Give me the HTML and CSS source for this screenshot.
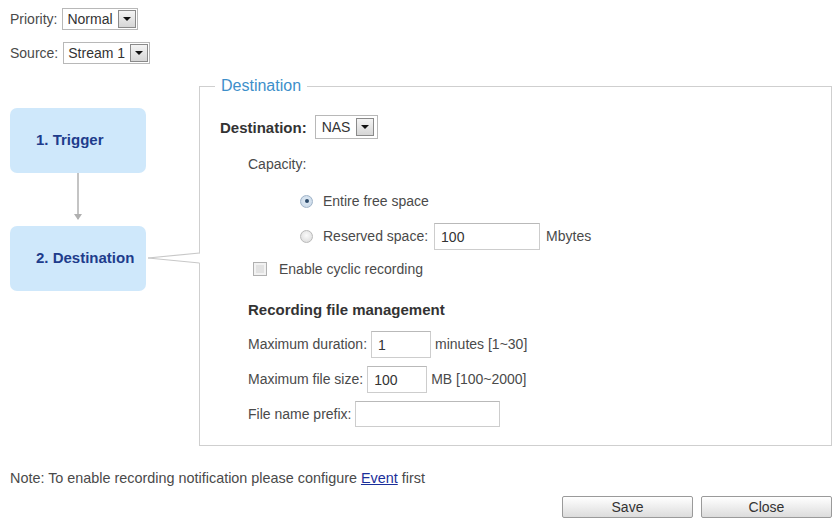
FILE: index.html
```html
<!DOCTYPE html>
<html lang="en">
<head>
  <meta charset="UTF-8">
  <title>Recording Settings</title>
  <link rel="stylesheet" href="styles.css">
</head>
<body>

<div class="page">
  <div class="top-row">
    <span class="lbl">Priority:</span>
    <span class="select"><span class="select-val">Normal</span><span class="select-btn"></span></span>
  </div>
  <div class="top-row second">
    <span class="lbl">Source:</span>
    <span class="select"><span class="select-val">Stream 1</span><span class="select-btn"></span></span>
  </div>

  <div class="main">
    <div class="flow">
      <div class="step">1. Trigger</div>
      <div class="flow-arrow">
        <svg width="12" height="53" viewBox="0 0 12 53"><line x1="6" y1="0" x2="6" y2="46" stroke="#b0b0b0" stroke-width="1.5"/><path d="M2 41 L6 47 L10 41 Z" fill="#b0b0b0"/></svg>
      </div>
      <div class="step">2. Destination</div>
    </div>

    <fieldset class="panel">
      <legend>Destination</legend>
      <div class="row row-dest">
        <b class="big">Destination:</b>
        <span class="select wide"><span class="select-val">NAS</span><span class="select-btn"></span></span>
      </div>
      <div class="row row-cap">Capacity:</div>
      <div class="row row-radio1">
        <span class="radio checked"></span>
        <span>Entire free space</span>
      </div>
      <div class="row row-radio2">
        <span class="radio"></span>
        <span>Reserved space:</span>
        <span class="input w-reserved">100</span>
        <span class="unit">Mbytes</span>
      </div>
      <div class="row row-check">
        <span class="check"></span>
        <span>Enable cyclic recording</span>
      </div>
      <div class="row row-head"><b class="big">Recording file management</b></div>
      <div class="row row-dur">
        <span>Maximum duration:</span>
        <span class="input w-dur">1</span>
        <span>minutes [1~30]</span>
      </div>
      <div class="row row-size">
        <span>Maximum file size:</span>
        <span class="input w-size">100</span>
        <span>MB [100~2000]</span>
      </div>
      <div class="row row-prefix">
        <span>File name prefix:</span>
        <span class="input w-prefix"></span>
      </div>
    </fieldset>

    <!-- callout from step 2 into the panel -->
    <svg class="pointer" width="58" height="20" viewBox="0 0 58 20">
      <rect x="52.5" y="5.5" width="2.5" height="9.5" fill="#fff"/>
      <line x1="2" y1="10" x2="53.5" y2="5" stroke="#c8c8c8" stroke-width="1.2"/>
      <line x1="2" y1="10" x2="53.5" y2="15" stroke="#c8c8c8" stroke-width="1.2"/>
    </svg>
  </div>

  <p class="note">Note: To enable recording notification please configure <a href="#">Event</a> first</p>

  <div class="actions">
    <button class="button">Save</button>
    <button class="button">Close</button>
  </div>
</div>

</body>
</html>
```

FILE: styles.css
```css
body {
  margin: 0;
  background: #fff;
  font-family: "Liberation Sans", Arial, sans-serif;
  font-size: 14px;
  color: #4a4a4a;
}
.page {
  padding: 8px 5px 0 10px;
}
.top-row {
  display: flex;
  align-items: center;
  height: 22px;
  gap: 5px;
}
.top-row.second {
  margin-top: 12px;
}
.select {
  display: inline-flex;
  align-items: center;
  height: 20px;
  border: 1px solid #b8b8b8;
  background: #fff;
  padding: 0 1px 0 4px;
  gap: 5px;
  color: #333;
}
.select.wide {
  height: 22px;
  padding: 0 3px 0 6px;
  gap: 6px;
}
.select-btn {
  width: 16px;
  height: 16px;
  border: 1px solid #8a8a8a;
  background: linear-gradient(#f4f4f4, #d6d6d6);
  position: relative;
}
.select-btn::after {
  content: "";
  position: absolute;
  left: 4px;
  top: 6px;
  border-left: 4px solid transparent;
  border-right: 4px solid transparent;
  border-top: 4px solid #111;
}
.main {
  display: flex;
  margin-top: 13px;
  position: relative;
}
.flow {
  width: 189px;
  flex-shrink: 0;
  padding-top: 31px;
}
.step {
  width: 136px;
  height: 65px;
  box-sizing: border-box;
  background: #cfe8fb;
  border-radius: 7px;
  display: flex;
  align-items: center;
  padding-left: 26px;
  padding-bottom: 2px;
  font-weight: bold;
  font-size: 15px;
  color: #1e3c8c;
}
.flow-arrow {
  width: 136px;
  height: 53px;
  display: flex;
  justify-content: center;
}
.flow-arrow svg {
  display: block;
}
.panel {
  flex: 1;
  margin: 0;
  padding: 0 20px 18px 20px;
  min-width: 0;
  border: 1px solid #cfcfcf;
}
.panel legend {
  margin-left: -5px;
  padding: 0 6px;
  font-size: 16px;
  line-height: 18px;
  color: #3d8fca;
}
.row {
  display: flex;
  align-items: center;
  gap: 4px;
}
.big {
  font-size: 15px;
  color: #333;
}
.row-dest {
  height: 24px;
  margin-top: 20px;
  gap: 8px;
}
.row-cap {
  height: 20px;
  margin-top: 15px;
  padding-left: 28px;
}
.row-radio1 {
  height: 20px;
  margin-top: 17px;
  padding-left: 80px;
  gap: 10px;
}
.row-radio2 {
  height: 28px;
  margin-top: 11px;
  padding-left: 80px;
  gap: 10px;
}
.row-radio2 .input {
  margin-left: -4px;
}
.row-check {
  height: 20px;
  margin-top: 9px;
  padding-left: 33px;
  gap: 12px;
}
.row-head {
  height: 20px;
  margin-top: 20px;
  padding-left: 28px;
}
.row-dur, .row-size, .row-prefix {
  padding-left: 28px;
}
.row-dur {
  height: 28px;
  margin-top: 11px;
}
.row-size {
  height: 28px;
  margin-top: 7px;
}
.row-prefix {
  height: 26px;
  margin-top: 8px;
}
.radio {
  width: 13px;
  height: 13px;
  border-radius: 50%;
  border: 1px solid #b9b9b9;
  background: radial-gradient(circle at 50% 40%, #fafafa, #d8d8d8);
  box-sizing: border-box;
  position: relative;
}
.radio.checked {
  border-color: #9fb3c8;
  background: radial-gradient(circle at 50% 45%, #e4eef8, #c3d3e3);
}
.radio.checked::after {
  content: "";
  position: absolute;
  left: 3.5px;
  top: 3.5px;
  width: 4px;
  height: 4px;
  border-radius: 50%;
  background: #2c4a6a;
}
.check {
  width: 12px;
  height: 12px;
  border: 1px solid #b0b0b0;
  background: #e2e2e2;
  box-shadow: inset 0 0 0 2px #f2f2f2;
}
.input {
  display: inline-flex;
  align-items: center;
  box-sizing: border-box;
  height: 27px;
  border: 1px solid #cdcdcd;
  border-top-color: #b9b9b9;
  padding: 2px 6px 0;
  color: #333;
  background: #fff;
}
.w-reserved { width: 106px; }
.w-dur { width: 60px; }
.w-size { width: 60px; }
.w-prefix { width: 145px; height: 26px; }
.unit {
  margin-left: -4px;
}
.note {
  margin: 24px 0 0;
  line-height: 16px;
  font-size: 14.4px;
}
.note a {
  color: #1a2f9a;
}
.actions {
  display: flex;
  justify-content: flex-end;
  gap: 8px;
  margin-top: 10px;
}
.button {
  width: 131px;
  height: 22px;
  border: 1px solid #9a9a9a;
  border-radius: 2px;
  background: linear-gradient(#ffffff, #dcdcdc);
  font-family: "Liberation Sans", Arial, sans-serif;
  font-size: 14px;
  color: #333;
  padding: 0;
}
.pointer {
  position: absolute;
  left: 136px;
  top: 171px;
}
```
